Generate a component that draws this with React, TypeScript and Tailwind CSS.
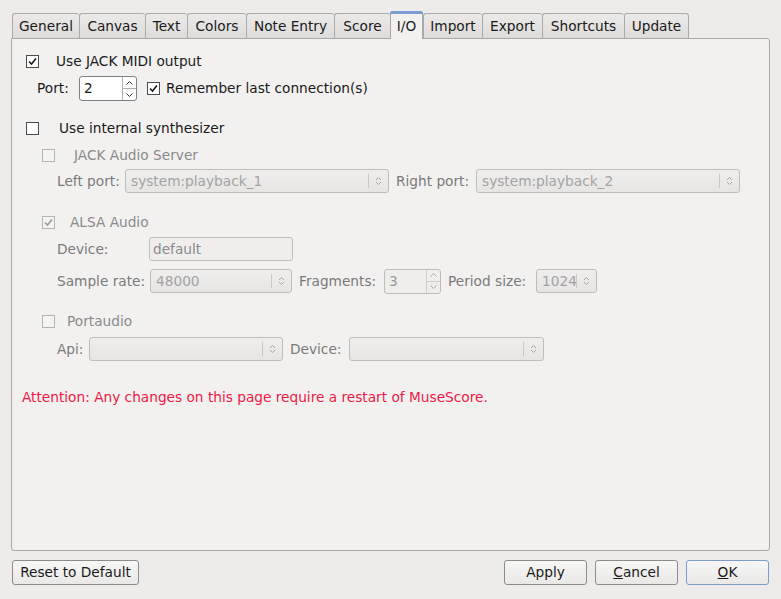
import React from "react";

const font = { fontFamily: '"DejaVu Sans", Verdana, sans-serif' };

function Check({ checked, disabled }: { checked?: boolean; disabled?: boolean }) {
  return (
    <div
      className={
        "w-[13px] h-[13px] border flex items-center justify-center shrink-0 " +
        (disabled ? "border-[#b4b4b4] bg-[#f4f4f3]" : "border-[#4a4a4a] bg-white")
      }
    >
      {checked && (
        <svg width="11" height="11" viewBox="0 0 11 11">
          <path
            d="M2 5.5 L4.5 8 L9 2.5"
            fill="none"
            stroke={disabled ? "#9a9a9a" : "#1a1a1a"}
            strokeWidth="1.6"
          />
        </svg>
      )}
    </div>
  );
}

function Arrows({ disabled }: { disabled?: boolean }) {
  const c = disabled ? "#a8a8a8" : "#444";
  return (
    <svg width="9" height="12" viewBox="0 0 9 12">
      <path d="M2 5 L4.5 2.5 L7 5" fill="none" stroke={c} strokeWidth="1" />
      <path d="M2 7 L4.5 9.5 L7 7" fill="none" stroke={c} strokeWidth="1" />
    </svg>
  );
}

function Combo({ w, text }: { w: string; text?: string }) {
  return (
    <div
      className={
        "h-[24px] shrink-0 border border-[#bdbdbb] rounded-[3px] bg-gradient-to-b from-[#efeeed] to-[#e6e5e4] flex items-center " +
        w
      }
    >
      <span className="flex-1 pl-[5px] text-[#a3a3a3] overflow-hidden whitespace-nowrap">{text}</span>
      <div className="w-px h-[14px] bg-[#c8c8c6]" />
      <div className="w-[19px] flex justify-center">
        <Arrows disabled />
      </div>
    </div>
  );
}

function Spin({ w, text, disabled }: { w: string; text: string; disabled?: boolean }) {
  return (
    <div
      className={
        "h-[25px] shrink-0 border rounded-[3px] flex " +
        (disabled ? "border-[#bdbdbb] bg-[#efeeed] " : "border-[#7f7f7f] bg-white ") +
        w
      }
    >
      <span className={"flex-1 pl-[4px] flex items-center " + (disabled ? "text-[#9a9a9a]" : "text-[#1a1a1a]")}>
        {text}
      </span>
      <div
        className={
          "w-[14px] flex flex-col border-l " +
          (disabled ? "border-[#cfcfcd]" : "border-[#b0b0b0]")
        }
      >
        <div className={"flex-1 flex items-center justify-center border-b " + (disabled ? "border-[#cfcfcd]" : "border-[#b0b0b0]")}>
          <svg width="9" height="6" viewBox="0 0 9 6">
            <path d="M1.5 4.5 L4.5 1.5 L7.5 4.5" fill="none" stroke={disabled ? "#a8a8a8" : "#333"} strokeWidth="1" />
          </svg>
        </div>
        <div className="flex-1 flex items-center justify-center">
          <svg width="9" height="6" viewBox="0 0 9 6">
            <path d="M1.5 1.5 L4.5 4.5 L7.5 1.5" fill="none" stroke={disabled ? "#a8a8a8" : "#333"} strokeWidth="1" />
          </svg>
        </div>
      </div>
    </div>
  );
}

const tabs: [string, string][] = [
  ["General", "w-[67px]"],
  ["Canvas", "w-[66px]"],
  ["Text", "w-[42px]"],
  ["Colors", "w-[59px]"],
  ["Note Entry", "w-[88px]"],
  ["Score", "w-[56px]"],
  ["I/O", "w-[33px]"],
  ["Import", "w-[59px]"],
  ["Export", "w-[60px]"],
  ["Shortcuts", "w-[82px]"],
  ["Update", "w-[65px] border-r"],
];

function Button({ children, w, def }: { children: React.ReactNode; w: string; def?: boolean }) {
  return (
    <div
      className={
        "h-[25px] rounded-[3px] border flex items-center justify-center text-[#1a1a1a] bg-gradient-to-b from-[#f7f7f6] to-[#e9e8e7] " +
        (def ? "border-[#7d9bc8] " : "border-[#8c8c8c] ") +
        w
      }
    >
      {children}
    </div>
  );
}

export default function App() {
  return (
    <div className="w-[781px] h-[599px] bg-[#edeceb] text-[13.7px] overflow-hidden" style={font}>
      <div className="flex items-end h-[38px] pl-[12px]">
        {tabs.map(([t, w]) =>
          t === "I/O" ? (
            <div
              key={t}
              className={
                "h-[28px] -mb-px relative z-10 bg-[#f2f1f0] border border-b-0 border-[#a8a8a8] rounded-t-[3px] flex items-center justify-center text-[#1a1a1a] " +
                w
              }
            >
              <div className="absolute left-[-1px] right-[-1px] top-[-1px] h-[3px] rounded-t-[3px] bg-[#7a9cd0]" />
              <span className="mt-[1px]">{t}</span>
            </div>
          ) : (
            <div
              key={t}
              className={
                "h-[25px] bg-gradient-to-b from-[#eceae9] to-[#dddcda] border-l border-t border-[#aaaaaa] rounded-t-[3px] flex items-center justify-center text-[#1a1a1a] whitespace-nowrap " +
                w
              }
            >
              {t}
            </div>
          )
        )}
      </div>
      <div className="mx-[11px] h-[513px] border border-[#a8a8a8] rounded-b-[3px] rounded-tr-[3px] bg-[#f2f1f0] flex flex-col whitespace-nowrap">
        {/* Row 1 */}
        <div className="flex items-center h-[20px] mt-[12px] pl-[14px]">
          <Check checked />
          <span className="ml-[17px] text-[#1a1a1a]">Use JACK MIDI output</span>
        </div>
        {/* Row 2 */}
        <div className="flex items-center h-[25px] mt-[5px] pl-[25px]">
          <span className="w-[42px] text-[#1a1a1a]">Port:</span>
          <Spin w="w-[58px]" text="2" />
          <div className="ml-[10px]">
            <Check checked />
          </div>
          <span className="ml-[6px] text-[#1a1a1a]">Remember last connection(s)</span>
        </div>
        {/* Row 3 */}
        <div className="flex items-center h-[20px] mt-[17px] pl-[14px]">
          <Check />
          <span className="ml-[20px] text-[#1a1a1a]">Use internal synthesizer</span>
        </div>
        {/* Row 4 */}
        <div className="flex items-center h-[20px] mt-[7px] pl-[30px]">
          <Check disabled />
          <span className="ml-[19px] text-[#8a8a8a]">JACK Audio Server</span>
        </div>
        {/* Row 5 */}
        <div className="flex items-center h-[24px] mt-[4px] pl-[45px] text-[#7a7a7a]">
          <span className="w-[68px]">Left port:</span>
          <Combo w="w-[264px]" text="system:playback_1" />
          <span className="ml-[7px] w-[80px]">Right port:</span>
          <Combo w="w-[264px]" text="system:playback_2" />
        </div>
        {/* Row 6 */}
        <div className="flex items-center h-[20px] mt-[19px] pl-[30px]">
          <Check disabled checked />
          <span className="ml-[15px] text-[#8a8a8a]">ALSA Audio</span>
        </div>
        {/* Row 7 */}
        <div className="flex items-center h-[24px] mt-[5px] pl-[45px] text-[#7a7a7a]">
          <span className="w-[92px]">Device:</span>
          <div className="w-[144px] h-[24px] border border-[#bdbdbb] rounded-[3px] bg-[#efeeed] flex items-center pl-[3px] text-[#8a8a8a]">
            default
          </div>
        </div>
        {/* Row 8 */}
        <div className="flex items-center h-[24px] mt-[8px] pl-[45px] text-[#7a7a7a]">
          <span className="w-[93px]">Sample rate:</span>
          <Combo w="w-[142px]" text="48000" />
          <span className="ml-[7px] w-[85px]">Fragments:</span>
          <Spin w="w-[57px]" text="3" disabled />
          <span className="ml-[7px] w-[88px]">Period size:</span>
          <Combo w="w-[61px]" text="1024" />
        </div>
        {/* Row 9 */}
        <div className="flex items-center h-[20px] mt-[18px] pl-[30px]">
          <Check disabled />
          <span className="ml-[12px] text-[#8a8a8a]">Portaudio</span>
        </div>
        {/* Row 10 */}
        <div className="flex items-center h-[24px] mt-[6px] pl-[45px] text-[#7a7a7a]">
          <span className="w-[32px]">Api:</span>
          <Combo w="w-[194px]" />
          <span className="ml-[7px] w-[59px]">Device:</span>
          <Combo w="w-[195px]" />
        </div>
        {/* Row 11 */}
        <div className="flex items-center h-[20px] mt-[26px] pl-[10px] text-[#ee1845]">
          Attention: Any changes on this page require a restart of MuseScore.
        </div>
      </div>
      <div className="flex items-center mt-[9px] px-[12px]">
        <Button w="w-[127px]">Reset to Default</Button>
        <div className="flex-1" />
        <Button w="w-[83px]">Apply</Button>
        <div className="w-[8px]" />
        <Button w="w-[83px]">
          <span>
            <span className="underline">C</span>ancel
          </span>
        </Button>
        <div className="w-[8px]" />
        <Button w="w-[83px]" def>
          <span>
            <span className="underline">O</span>K
          </span>
        </Button>
      </div>
    </div>
  );
}
